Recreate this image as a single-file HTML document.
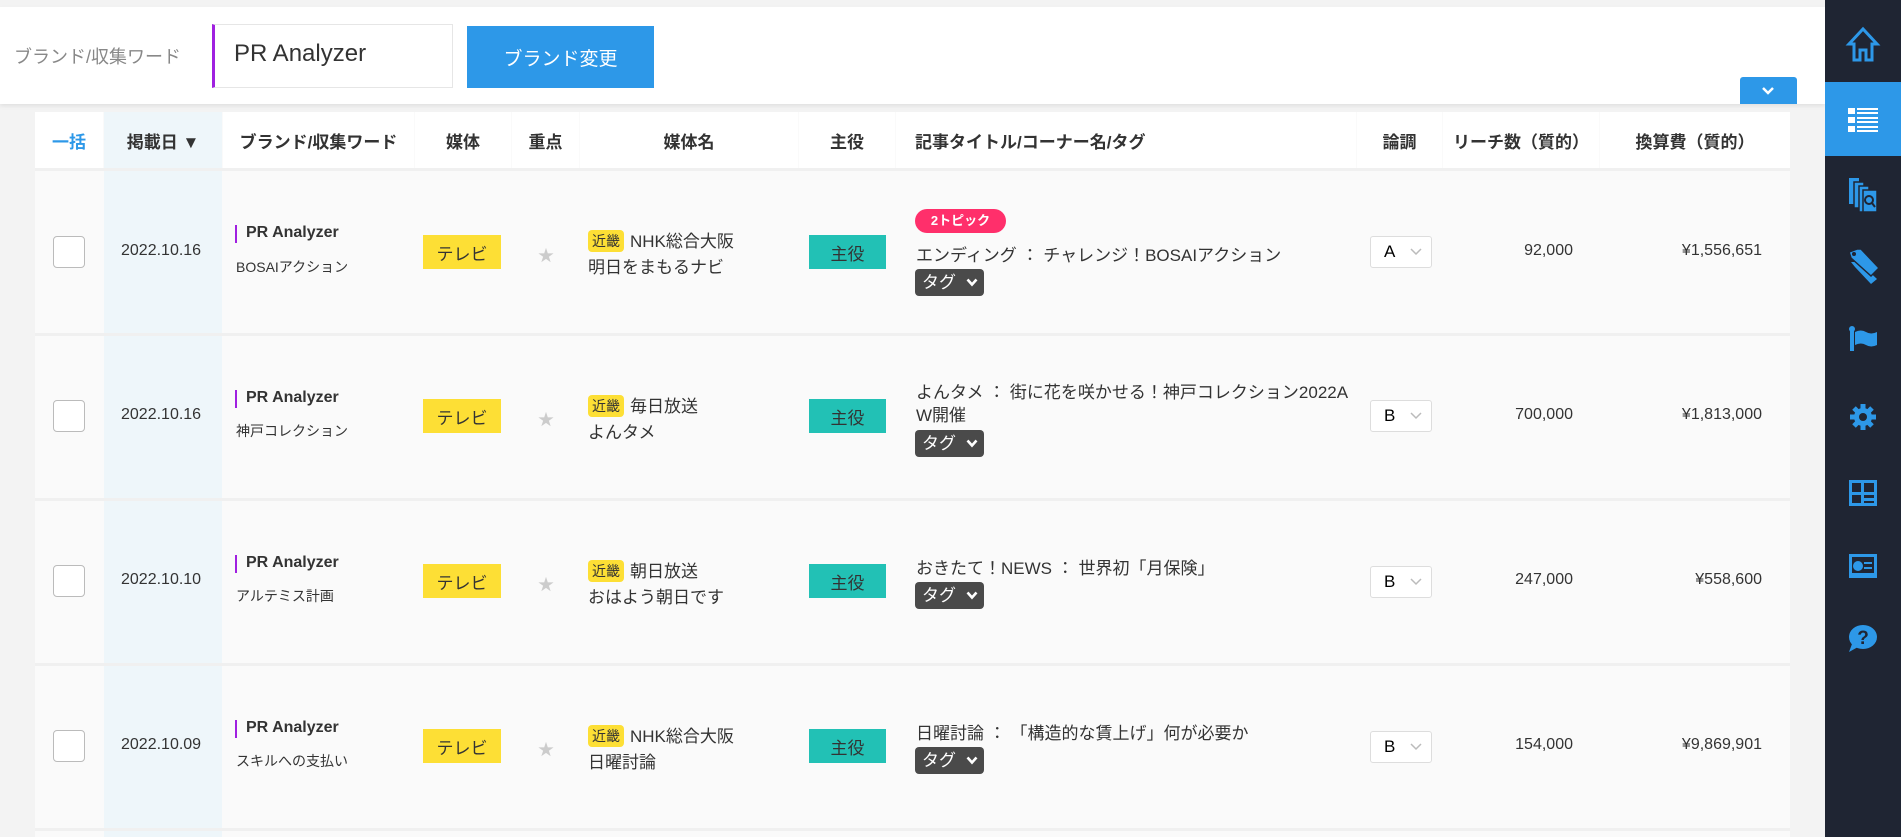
<!DOCTYPE html>
<html><head><meta charset="utf-8">
<style>
*{box-sizing:border-box;margin:0;padding:0}
body{width:1901px;height:837px;overflow:hidden;background:#f3f3f3;font-family:"Liberation Sans","Noto Sans CJK JP",sans-serif;color:#333;position:relative}
.abs{position:absolute}
#hdr{left:0;top:7px;width:1825px;height:97px;background:#fff;box-shadow:0 2px 4px rgba(0,0,0,.08)}
#side{left:1825px;top:0;width:76px;height:837px;background:#1f2533}
.tbl{left:35px;top:112px;width:1755px;height:725px;background:#fafafa}
.hc{position:absolute;top:112px;height:57px;background:#fff;font-weight:bold;font-size:17px;color:#333;display:flex;align-items:center;justify-content:center}
.t{position:absolute;white-space:nowrap}
.cb{position:absolute;left:53px;width:32px;height:32px;border:1px solid #bbb;border-radius:4px;background:#fff}
.tv{position:absolute;left:423px;width:78px;height:34px;background:#fddf35;font-size:17px;display:flex;align-items:center;justify-content:center;color:#333}
.shu{position:absolute;left:809px;width:77px;height:34px;background:#22c1b5;font-size:17px;display:flex;align-items:center;justify-content:center;color:#333}
.kin{display:inline-block;background:#fddf35;border-radius:4px;font-size:14px;padding:1px 4px;margin-right:6px;vertical-align:1px}
.tag{position:absolute;left:915px;width:69px;height:27px;background:#4a4a4a;border-radius:4px;color:#fff;font-size:17px;padding-left:7px;line-height:27px}
.tag svg{position:absolute;right:6px;top:9px}
.sel{position:absolute;left:1370px;width:62px;height:32px;border:1px solid #ddd;border-radius:3px;background:#fff;font-size:17px;color:#000;line-height:30px;padding-left:13px}
.sel svg{position:absolute;right:9px;top:11px}
.sep{position:absolute;left:35px;width:1755px;height:3px;background:#f0f0f0}
</style></head><body>
<div class="abs" id="hdr"></div>
<div class="t" style="left:14px;top:43px;font-size:18px;color:#888">ブランド/収集ワード</div>
<div class="abs" style="left:212px;top:24px;width:241px;height:64px;border:1px solid #e6e6e6;border-left:3px solid #a020e0;background:#fff"></div>
<div class="t" style="left:234px;top:40px;font-size:24px;color:#333">PR Analyzer</div>
<div class="abs" style="left:467px;top:26px;width:187px;height:62px;background:#2d98e8;color:#fff;font-size:19px;display:flex;align-items:center;justify-content:center">ブランド変更</div>
<div class="abs" style="left:1740px;top:77px;width:57px;height:27px;background:#2d98e8;border-radius:3px 3px 0 0"><svg width="57" height="27"><path d="M23 11l5 5 5-5" stroke="#fff" stroke-width="2.5" fill="none"/></svg></div>

<div class="abs tbl"></div>
<div class="abs" style="left:104px;top:112px;width:118px;height:725px;background:#eef6fa"></div>
<div class="hc" style="left:35px;width:68px;color:#2d98e8">一括</div>
<div class="hc" style="left:104px;width:118px;background:#eef6fa">掲載日 ▼</div>
<div class="hc" style="left:223px;width:191px">ブランド/収集ワード</div>
<div class="hc" style="left:415px;width:96px">媒体</div>
<div class="hc" style="left:512px;width:67px">重点</div>
<div class="hc" style="left:580px;width:218px">媒体名</div>
<div class="hc" style="left:799px;width:96px">主役</div>
<div class="hc" style="left:896px;width:460px;justify-content:flex-start;padding-left:19px">記事タイトル/コーナー名/タグ</div>
<div class="hc" style="left:1357px;width:85px">論調</div>
<div class="hc" style="left:1443px;width:156px">リーチ数（質的）</div>
<div class="hc" style="left:1600px;width:190px">換算費（質的）</div>
<div class="sep" style="top:168px"></div>
<div class="sep" style="top:333px"></div>
<div class="sep" style="top:498px"></div>
<div class="sep" style="top:663px"></div>
<div class="sep" style="top:828px"></div>

<!-- row1 -->
<div class="cb" style="top:236px"></div>
<div class="t" style="left:121px;top:242px;font-size:16px">2022.10.16</div>
<div class="abs" style="left:235px;top:225px;width:2px;height:18px;background:#a020e0"></div>
<div class="t" style="left:246px;top:224px;font-size:16px;font-weight:bold">PR Analyzer</div>
<div class="t" style="left:236px;top:257px;font-size:14px">BOSAIアクション</div>
<div class="tv" style="top:235px">テレビ</div>
<div class="t" style="left:538px;top:242px;font-size:16px;color:#ccc">★</div>
<div class="t" style="left:588px;top:227px;font-size:17px"><span class="kin">近畿</span>NHK総合大阪</div>
<div class="t" style="left:588px;top:253px;font-size:17px">明日をまもるナビ</div>
<div class="shu" style="top:235px">主役</div>
<div class="abs" style="left:915px;top:209px;width:91px;height:24px;background:#ff2f6b;border-radius:12px;color:#fff;font-size:13px;font-weight:bold;text-align:center;line-height:24px">2トピック</div>
<div class="t" style="left:916px;top:241px;font-size:17px">エンディング ： チャレンジ！BOSAIアクション</div>
<div class="tag" style="top:269px">タグ<svg width="12" height="9"><path d="M1.5 1.5l4.5 5 4.5-5" stroke="#fff" stroke-width="2.6" fill="none"/></svg></div>
<div class="sel" style="top:236px">A<svg width="12" height="8"><path d="M1 1l5 5 5-5" stroke="#bbb" stroke-width="1.5" fill="none"/></svg></div>
<div class="t" style="right:328px;top:242px;font-size:16px">92,000</div>
<div class="t" style="right:139px;top:242px;font-size:16px">¥1,556,651</div>

<!-- row2 -->
<div class="cb" style="top:400px"></div>
<div class="t" style="left:121px;top:406px;font-size:16px">2022.10.16</div>
<div class="abs" style="left:235px;top:390px;width:2px;height:18px;background:#a020e0"></div>
<div class="t" style="left:246px;top:389px;font-size:16px;font-weight:bold">PR Analyzer</div>
<div class="t" style="left:236px;top:421px;font-size:14px">神戸コレクション</div>
<div class="tv" style="top:399px">テレビ</div>
<div class="t" style="left:538px;top:406px;font-size:16px;color:#ccc">★</div>
<div class="t" style="left:588px;top:392px;font-size:17px"><span class="kin">近畿</span>毎日放送</div>
<div class="t" style="left:588px;top:418px;font-size:17px">よんタメ</div>
<div class="shu" style="top:399px">主役</div>
<div class="t" style="left:916px;top:378px;font-size:17px">よんタメ ： 街に花を咲かせる！神戸コレクション2022A</div>
<div class="t" style="left:916px;top:401px;font-size:17px">W開催</div>
<div class="tag" style="top:430px">タグ<svg width="12" height="9"><path d="M1.5 1.5l4.5 5 4.5-5" stroke="#fff" stroke-width="2.6" fill="none"/></svg></div>
<div class="sel" style="top:400px">B<svg width="12" height="8"><path d="M1 1l5 5 5-5" stroke="#bbb" stroke-width="1.5" fill="none"/></svg></div>
<div class="t" style="right:328px;top:406px;font-size:16px">700,000</div>
<div class="t" style="right:139px;top:406px;font-size:16px">¥1,813,000</div>

<!-- row3 -->
<div class="cb" style="top:565px"></div>
<div class="t" style="left:121px;top:571px;font-size:16px">2022.10.10</div>
<div class="abs" style="left:235px;top:555px;width:2px;height:18px;background:#a020e0"></div>
<div class="t" style="left:246px;top:554px;font-size:16px;font-weight:bold">PR Analyzer</div>
<div class="t" style="left:236px;top:586px;font-size:14px">アルテミス計画</div>
<div class="tv" style="top:564px">テレビ</div>
<div class="t" style="left:538px;top:571px;font-size:16px;color:#ccc">★</div>
<div class="t" style="left:588px;top:557px;font-size:17px"><span class="kin">近畿</span>朝日放送</div>
<div class="t" style="left:588px;top:583px;font-size:17px">おはよう朝日です</div>
<div class="shu" style="top:564px">主役</div>
<div class="t" style="left:916px;top:554px;font-size:17px">おきたて！NEWS ： 世界初「月保険」</div>
<div class="tag" style="top:582px">タグ<svg width="12" height="9"><path d="M1.5 1.5l4.5 5 4.5-5" stroke="#fff" stroke-width="2.6" fill="none"/></svg></div>
<div class="sel" style="top:566px">B<svg width="12" height="8"><path d="M1 1l5 5 5-5" stroke="#bbb" stroke-width="1.5" fill="none"/></svg></div>
<div class="t" style="right:328px;top:571px;font-size:16px">247,000</div>
<div class="t" style="right:139px;top:571px;font-size:16px">¥558,600</div>

<!-- row4 -->
<div class="cb" style="top:730px"></div>
<div class="t" style="left:121px;top:736px;font-size:16px">2022.10.09</div>
<div class="abs" style="left:235px;top:720px;width:2px;height:18px;background:#a020e0"></div>
<div class="t" style="left:246px;top:719px;font-size:16px;font-weight:bold">PR Analyzer</div>
<div class="t" style="left:236px;top:751px;font-size:14px">スキルへの支払い</div>
<div class="tv" style="top:729px">テレビ</div>
<div class="t" style="left:538px;top:736px;font-size:16px;color:#ccc">★</div>
<div class="t" style="left:588px;top:722px;font-size:17px"><span class="kin">近畿</span>NHK総合大阪</div>
<div class="t" style="left:588px;top:748px;font-size:17px">日曜討論</div>
<div class="shu" style="top:729px">主役</div>
<div class="t" style="left:916px;top:719px;font-size:17px">日曜討論 ： 「構造的な賃上げ」何が必要か</div>
<div class="tag" style="top:747px">タグ<svg width="12" height="9"><path d="M1.5 1.5l4.5 5 4.5-5" stroke="#fff" stroke-width="2.6" fill="none"/></svg></div>
<div class="sel" style="top:731px">B<svg width="12" height="8"><path d="M1 1l5 5 5-5" stroke="#bbb" stroke-width="1.5" fill="none"/></svg></div>
<div class="t" style="right:328px;top:736px;font-size:16px">154,000</div>
<div class="t" style="right:139px;top:736px;font-size:16px">¥9,869,901</div>

<div class="abs" id="side">
<div class="abs" style="left:0;top:82px;width:76px;height:74px;background:#2d98e8"></div>
<svg class="abs" style="left:0;top:0" width="76" height="837">
<g fill="none" stroke="#2d98e8" stroke-width="3">
<path d="M24 44L38 29 52 44H47V60H41V50H35V60H29V44Z"/>
</g>
<g fill="#fff">
<rect x="23" y="108" width="7" height="6"/><rect x="32" y="108" width="21" height="2"/><rect x="32" y="112" width="21" height="2"/>
<rect x="23" y="117" width="7" height="6"/><rect x="32" y="117" width="21" height="2"/><rect x="32" y="121" width="21" height="2"/>
<rect x="23" y="126" width="7" height="6"/><rect x="32" y="126" width="21" height="2"/><rect x="32" y="130" width="21" height="2"/>
</g>
<g fill="#2d98e8">
<rect x="24" y="178" width="10" height="26"/><rect x="29" y="182" width="10" height="26" stroke="#1f2533" stroke-width="1.5"/><rect x="34" y="186" width="10" height="26" stroke="#1f2533" stroke-width="1.5"/>
<rect x="38" y="190" width="14" height="22" stroke="#1f2533" stroke-width="1.5"/>
<circle cx="44" cy="200" r="4" fill="none" stroke="#1f2533" stroke-width="2"/><path d="M47 203l3 4" stroke="#1f2533" stroke-width="2"/>
<path d="M26 262l4 5 16 17 6-5-18-17z"/>
<path d="M24 252l8-3h4l18 19-8 8-20-18z" stroke="#1f2533" stroke-width="1.5"/>
<circle cx="29" cy="254" r="2" fill="#1f2533"/>
<circle cx="27" cy="329" r="3"/><rect x="25" y="329" width="4" height="22"/><path d="M30 332q6-3 11 0t11 0v13q-6 3-11 0t-11 0z"/>
<circle cx="38" cy="417" r="9"/>
<g stroke="#2d98e8" stroke-width="5"><path d="M38 404v26M25 417h26M29 408l18 18M47 408l-18 18"/></g>
<circle cx="38" cy="417" r="4" fill="#1f2533"/>
<path d="M24 480h28v26H24zM27 483v9h9v-9zM39 483v9h10v-9zM27 495v8h9v-8zM39 495v3h10v-3zM39 501v2h10v-2z" fill-rule="evenodd"/>
<path d="M24 554h28v24H24zM27 557v16h22v-16z" fill-rule="evenodd"/>
<circle cx="33" cy="566" r="5"/><rect x="39" y="562" width="8" height="2"/><rect x="39" y="567" width="8" height="2"/>
<ellipse cx="38" cy="637" rx="14" ry="12"/><path d="M27 644l-3 8 9-5z"/>
</g>
<text x="38" y="644" fill="#1f2533" font-size="19" font-weight="bold" text-anchor="middle" font-family="Liberation Sans">?</text>
</svg>
</div>
</body></html>
